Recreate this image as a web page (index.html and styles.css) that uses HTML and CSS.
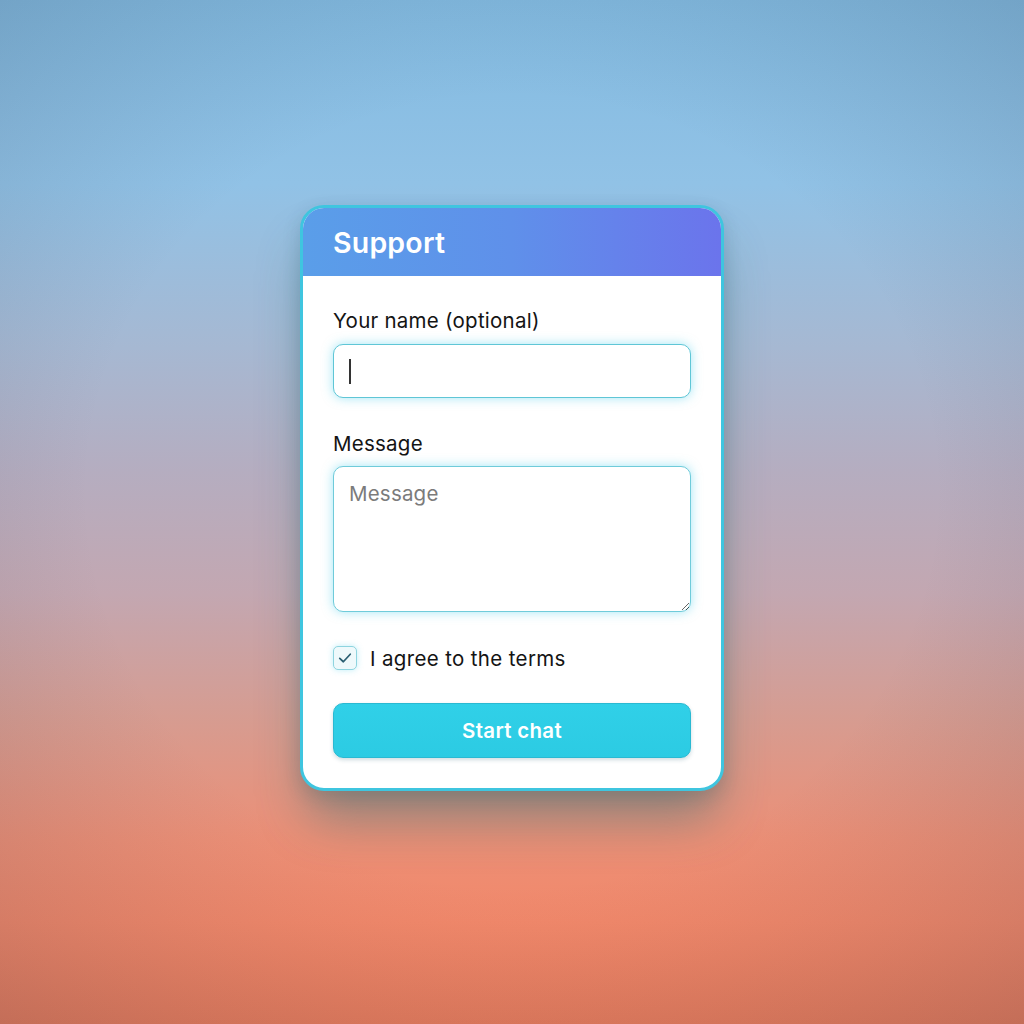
FILE: index.html
```html
<!DOCTYPE html>
<html lang="en">
<head>
<meta charset="utf-8">
<title>Support</title>
<link rel="stylesheet" href="styles.css">
</head>
<body>
<div class="page">
  <div class="card">
    <div class="card-header">
      <h1 class="title">Support</h1>
    </div>
    <form class="card-body">
      <label class="label">Your name (optional)</label>
      <div class="input"><span class="caret"></span></div>
      <label class="label label-gap">Message</label>
      <textarea class="textarea" placeholder="Message"></textarea>
      <div class="check-row">
        <span class="checkbox">
          <svg viewBox="0 0 24 24" width="18" height="18"><path d="M5 12.5 L9.8 17 L19 7" fill="none" stroke="#2a5f72" stroke-width="2.3" stroke-linecap="round" stroke-linejoin="round"/></svg>
        </span>
        <span class="check-label">I agree to the terms</span>
      </div>
      <button type="button" class="button">Start chat</button>
    </form>
  </div>
</div>
</body>
</html>
```

FILE: styles.css
```css
html, body {
  margin: 0;
  padding: 0;
}
body {
  width: 1024px;
  height: 1024px;
  overflow: hidden;
  font-family: Inter, "Noto Sans", "Liberation Sans", sans-serif;
  background:
    radial-gradient(ellipse 75% 70% at 50% 48%, rgba(0,0,0,0) 55%, rgba(40,50,70,0.18) 100%),
    linear-gradient(to bottom, #82bae0 0%, #91c2e6 18%, #a6b8d2 34%, #b5adc0 46%, #c3a7b1 58%, #d69c91 70%, #ec8f76 82%, #f2886a 90%, #e67b5c 100%);
}
.page {
  height: 1024px;
  display: flex;
  justify-content: center;
  align-items: flex-start;
  padding-top: 205px;
  box-sizing: border-box;
}
.card {
  width: 424px;
  box-sizing: border-box;
  border: 3px solid #3fc5df;
  border-radius: 24px;
  background: #ffffff;
  overflow: hidden;
  box-shadow: 0 36px 50px -8px rgba(40, 110, 115, 0.45), 0 6px 18px rgba(30, 60, 80, 0.18);
}
.card-header {
  height: 68px;
  display: flex;
  align-items: center;
  padding: 0 30px;
  background: linear-gradient(to right, #5a9ee9 0%, #5f90ea 50%, #6b74ec 100%);
}
.title {
  margin: 0;
  color: #ffffff;
  font-size: 28.5px;
  font-weight: 600;
  letter-spacing: 0.2px;
}
.card-body {
  display: flex;
  flex-direction: column;
  padding: 33px 30px 30px;
  margin: 0;
}
.label {
  font-size: 20.5px;
  line-height: 24px;
  letter-spacing: 0.25px;
  color: #141414;
  margin-bottom: 11px;
}
.label-gap {
  margin-top: 34px;
  margin-bottom: 10px;
}
.input {
  height: 54px;
  box-sizing: border-box;
  border: 1.5px solid #5fc6d6;
  border-radius: 10px;
  background: #fff;
  box-shadow: 0 0 11px rgba(70, 205, 235, 0.5);
  display: flex;
  align-items: center;
  padding-left: 15px;
}
.caret {
  width: 1.5px;
  height: 25px;
  background: #333;
}
.textarea {
  height: 146px;
  box-sizing: border-box;
  border: 1.5px solid #6fcbda;
  border-radius: 10px;
  background: #fff;
  box-shadow: 0 0 11px rgba(70, 205, 235, 0.5);
  padding: 15px 15px;
  font-family: inherit;
  font-size: 20.5px;
  line-height: 24px;
  letter-spacing: 0.2px;
  color: #222;
  resize: vertical;
  outline: none;
  margin: 0;
}
.textarea::placeholder {
  color: #7b7b7b;
}
.check-row {
  display: flex;
  align-items: center;
  margin-top: 34px;
  height: 24px;
}
.checkbox {
  width: 24px;
  height: 24px;
  box-sizing: border-box;
  border: 1.5px solid #8ed4df;
  border-radius: 5px;
  background: #eef9fb;
  box-shadow: 0 0 6px rgba(70, 205, 235, 0.35);
  display: flex;
  align-items: center;
  justify-content: center;
}
.check-label {
  margin-left: 13px;
  font-size: 20.5px;
  letter-spacing: 0.35px;
  color: #141414;
}
.button {
  margin-top: 33px;
  height: 55px;
  border: 1px solid #2ab9d2;
  border-radius: 10px;
  background: linear-gradient(to bottom, #30d0e8, #2ccbe3);
  box-shadow: 0 2px 4px rgba(20, 80, 100, 0.2);
  color: #ffffff;
  font-family: inherit;
  font-size: 20.5px;
  font-weight: 600;
  letter-spacing: 0.3px;
  cursor: pointer;
}
```
